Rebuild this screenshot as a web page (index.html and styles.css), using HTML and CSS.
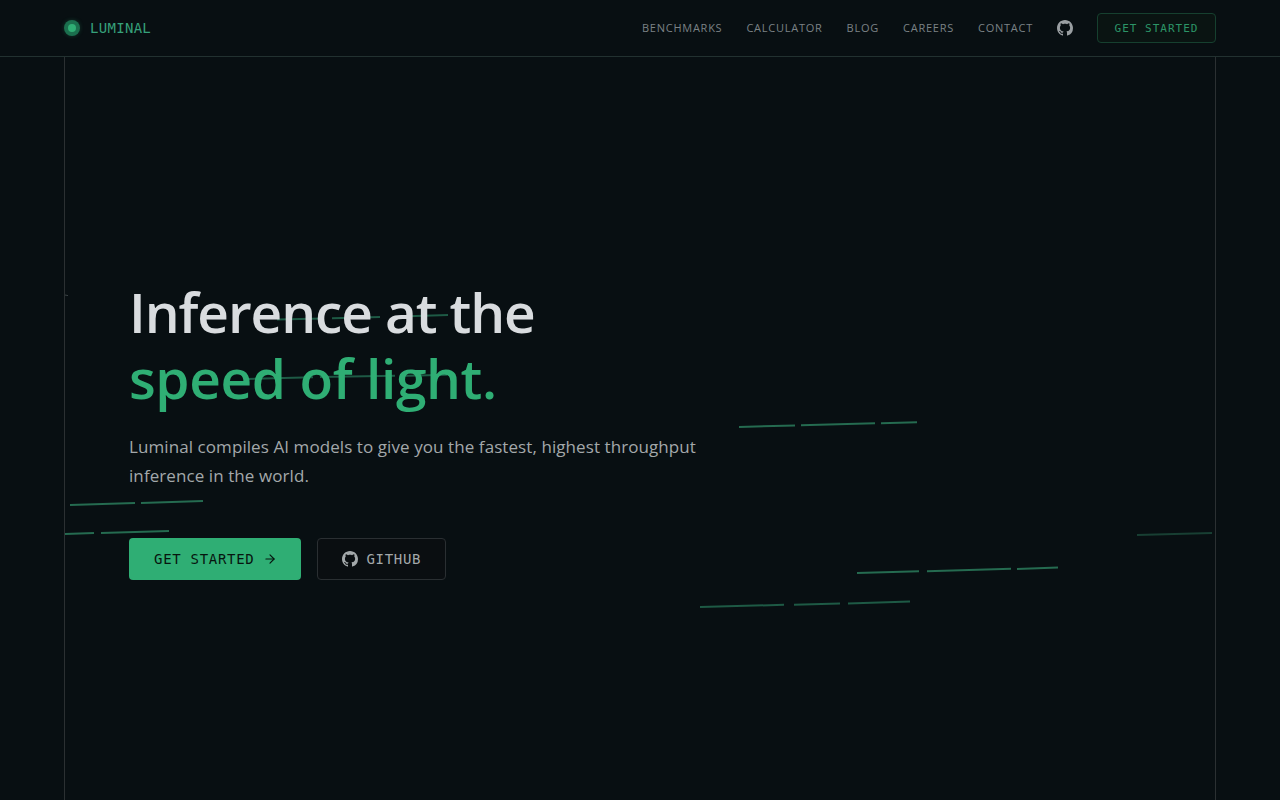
FILE: index.html
```html
<!DOCTYPE html>
<html lang="en">
<head>
  <meta charset="UTF-8">
  <title>Luminal</title>
  <meta name="viewport" content="width=device-width, initial-scale=1.0">
  <link rel="stylesheet" href="styles.css">
</head>
<body>

  <svg width="0" height="0" class="defs">
    <symbol id="github" viewBox="0 0 16 16">
      <path fill="currentColor" d="M8 0C3.58 0 0 3.58 0 8c0 3.54 2.29 6.53 5.47 7.59.4.07.55-.17.55-.38 0-.19-.01-.82-.01-1.49-2.01.37-2.53-.49-2.69-.94-.09-.23-.48-.94-.82-1.13-.28-.15-.68-.52-.01-.53.63-.01 1.08.58 1.23.82.72 1.21 1.87.87 2.33.66.07-.52.28-.87.51-1.07-1.78-.2-3.64-.89-3.64-3.95 0-.87.31-1.59.82-2.15-.08-.2-.36-1.02.08-2.12 0 0 .67-.21 2.2.82.64-.18 1.32-.27 2-.27s1.36.09 2 .27c1.53-1.04 2.2-.82 2.2-.82.44 1.1.16 1.92.08 2.12.51.56.82 1.27.82 2.15 0 3.07-1.87 3.75-3.65 3.95.29.25.54.73.54 1.48 0 1.07-.01 1.93-.01 2.2 0 .21.15.46.55.38A8.01 8.01 0 0 0 16 8c0-4.42-3.58-8-8-8z"/>
    </symbol>
  </svg>

  <header class="topbar">
    <a class="logo" href="#"><span class="logo-dot"></span>LUMINAL</a>
    <nav class="nav">
      <a href="#" class="nav-link">BENCHMARKS</a>
      <a href="#" class="nav-link">CALCULATOR</a>
      <a href="#" class="nav-link">BLOG</a>
      <a href="#" class="nav-link">CAREERS</a>
      <a href="#" class="nav-link">CONTACT</a>
      <a href="#" class="nav-icon"><svg width="16" height="16"><use href="#github"/></svg></a>
      <a href="#" class="nav-cta">GET STARTED</a>
    </nav>
  </header>

  <main class="frame">
    <!-- light streaks, placed on the page canvas -->
    <svg class="streaks" width="1280" height="800" viewBox="0 0 1280 800">
      <g class="streak">
        <line x1="739" y1="427" x2="795" y2="425.4"/>
        <line x1="801" y1="425.2" x2="875" y2="423.2"/>
        <line x1="881" y1="423.2" x2="917" y2="422.2"/>
      </g>
      <g class="streak">
        <line x1="857" y1="573" x2="919" y2="571.2"/>
        <line x1="927" y1="571.2" x2="1011" y2="568.8"/>
        <line x1="1017" y1="569" x2="1058" y2="567.6"/>
      </g>
      <g class="streak dim">
        <line x1="700" y1="607" x2="784" y2="604.8"/>
        <line x1="794" y1="604.8" x2="840" y2="603.4"/>
        <line x1="848" y1="603.6" x2="910" y2="601.6"/>
      </g>
      <g class="streak faint">
        <line x1="1137" y1="535" x2="1212" y2="533"/>
      </g>
      <g class="streak">
        <line x1="70" y1="505" x2="135" y2="503"/>
        <line x1="141" y1="503" x2="203" y2="501"/>
      </g>
      <g class="streak">
        <line x1="65" y1="534" x2="94" y2="533"/>
        <line x1="101" y1="533" x2="169" y2="531"/>
      </g>
      <g class="streak dim">
        <line x1="277" y1="319.6" x2="323" y2="318.4"/>
        <line x1="332" y1="318.2" x2="380" y2="317"/>
        <line x1="400" y1="316.4" x2="448" y2="315"/>
      </g>
      <g class="streak dim">
        <line x1="247" y1="379" x2="313" y2="377.2"/>
        <line x1="320" y1="377" x2="395" y2="375.8"/>
        <line x1="400" y1="376" x2="447" y2="374.8"/>
      </g>
      <g class="streak tick">
        <line x1="65" y1="295" x2="68" y2="295.6"/>
      </g>
    </svg>

    <section class="hero">
      <h1>Inference at the<br><span class="accent">speed of light.</span></h1>
      <p>Luminal compiles AI models to give you the fastest, highest throughput inference in the world.</p>
      <div class="actions">
        <a href="#" class="btn btn-primary">GET STARTED
          <svg width="14" height="14" viewBox="0 0 24 24" fill="none" stroke="currentColor" stroke-width="2" stroke-linecap="round" stroke-linejoin="round"><path d="M5 12h14"/><path d="m12 5 7 7-7 7"/></svg>
        </a>
        <a href="#" class="btn btn-ghost"><svg width="16" height="16"><use href="#github"/></svg>GITHUB</a>
      </div>
    </section>
  </main>

</body>
</html>
```

FILE: styles.css
```css
* {
  box-sizing: border-box;
}

html, body {
  margin: 0;
  height: 100%;
}

body {
  background: #080f12;
  color: #d9dcdf;
  font-family: "Open Sans", "Noto Sans", sans-serif;
  overflow: hidden;
  display: flex;
  flex-direction: column;
}

a {
  color: inherit;
  text-decoration: none;
}

.defs {
  position: absolute;
}

.topbar {
  height: 57px;
  flex: none;
  padding: 0 64px;
  display: flex;
  align-items: center;
  justify-content: space-between;
  border-bottom: 1px solid #223130;
}

.logo {
  display: flex;
  align-items: center;
  gap: 10px;
  font-family: "DejaVu Sans Mono", monospace;
  font-size: 14px;
  letter-spacing: 0.3px;
  color: #36a07a;
}

.logo-dot {
  width: 16px;
  height: 16px;
  border-radius: 50%;
  background: #1b6f4e;
  box-shadow: 0 0 4px rgba(47, 174, 116, 0.25);
  display: flex;
  align-items: center;
  justify-content: center;
}

.logo-dot::after {
  content: "";
  width: 8px;
  height: 8px;
  border-radius: 50%;
  background: #2fae74;
}

.nav {
  display: flex;
  align-items: center;
  gap: 24px;
  font-size: 11px;
  letter-spacing: 0.75px;
  color: #7b8285;
}

.nav-link {
  padding-bottom: 2px;
}

.nav-icon {
  display: flex;
  color: #9a9fa2;
}

.nav-cta {
  height: 30px;
  width: 119px;
  display: flex;
  align-items: center;
  justify-content: center;
  font-family: "DejaVu Sans Mono", monospace;
  font-size: 11px;
  letter-spacing: 1px;
  color: #2c9467;
  background: #0a1412;
  border: 1px solid #16402f;
  border-radius: 4px;
}

.frame {
  flex: 1;
  margin: 0 64px;
  border-left: 1px solid #2b3032;
  border-right: 1px solid #2b3032;
  display: flex;
  align-items: center;
}

.streaks {
  position: absolute;
  left: 0;
  top: 0;
  pointer-events: none;
}

.streak {
  stroke: #256b50;
  stroke-width: 2;
}

.streak.dim {
  stroke: #1e5a45;
}

.streak.faint {
  stroke: #183f33;
}

.streak.tick {
  stroke: #3a4244;
  stroke-width: 1;
}

.hero {
  position: relative;
  padding-left: 64px;
  margin-top: 1px;
}

.hero h1 {
  margin: 0;
  font-size: 55px;
  font-weight: 600;
  line-height: 66px;
  letter-spacing: -1.1px;
  color: #d9dcdf;
}

.hero .accent {
  letter-spacing: -0.4px;
  color: #2fae74;
}

.hero p {
  margin: 21px 0 0;
  width: 600px;
  font-size: 17px;
  letter-spacing: 0.08px;
  line-height: 29px;
  color: #a3a8aa;
}

.actions {
  margin-top: 48px;
  display: flex;
  gap: 16px;
}

.btn {
  height: 42px;
  padding: 0 24px;
  display: flex;
  align-items: center;
  gap: 8px;
  font-family: "DejaVu Sans Mono", monospace;
  font-size: 14px;
  letter-spacing: 0.7px;
  border-radius: 4px;
}

.btn-primary {
  padding: 0 24px 0 25px;
  gap: 9px;
  background: #2fae74;
  color: #07150f;
}

.btn-ghost {
  color: #a3a8aa;
  background: #0a0e11;
  border: 1px solid #2a2f32;
}
```
